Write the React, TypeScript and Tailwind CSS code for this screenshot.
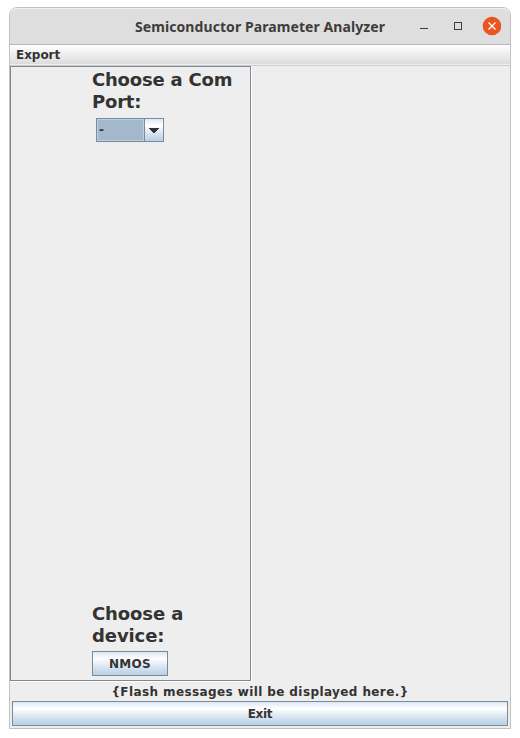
const metal = "border border-[#7a8a99] bg-[linear-gradient(to_bottom,#dde8f3_0%,#ffffff_30%,#dde8f3_60%,#b8cfe5_100%)]";

function TitleBar() {
  return (
    <header className="flex h-9 shrink-0 items-center rounded-t-[7px] border-t border-[#f2f2f2] bg-[#dedede]">
      <h1 className="ml-[125px] w-[252px] whitespace-nowrap font-['Noto_Sans',sans-serif] text-[14px] leading-5 font-bold tracking-[0.08px] text-[#3d3d3d]">
        Semiconductor Parameter Analyzer
      </h1>
      <svg className="ml-auto mr-[9px] -mt-px" width="82" height="20" viewBox="0 0 82 20" fill="none">
        <path d="M1 12h8v1H1z" fill="#3d3d3d" />
        <rect x="35.5" y="6.5" width="7" height="7" stroke="#3d3d3d" />
        <circle cx="73" cy="10" r="9.3" fill="#e95420" />
        <path d="M69.5 6.5l7 7M76.5 6.5l-7 7" stroke="#fff" strokeWidth="1.4" />
      </svg>
    </header>
  );
}

function ComPortSelect() {
  return (
    <div className="mt-[5px] ml-1 flex h-6 w-[68px] border border-[#7a8a99]">
      <div className="flex w-[47px] items-center border border-[#b8cfe5] bg-[#a3b8cc] pl-px text-[12px] leading-none">
        -
      </div>
      <div className="flex flex-1 items-center border-l border-[#7a8a99] bg-[linear-gradient(to_bottom,#dde8f3_0%,#ffffff_30%,#dde8f3_60%,#b8cfe5_100%)] pl-1">
        <svg width="10" height="5" viewBox="0 0 10 5" shapeRendering="crispEdges">
          <path d="M0 0h10v1H0zM1 1h8v1H1zM2 2h6v1H2zM3 3h4v1H3zM4 4h2v1H4z" fill="#333" />
        </svg>
      </div>
    </div>
  );
}

export default function App() {
  return (
    <div className="h-[738px] w-[520px] bg-white pt-[7px] pl-[9px] font-['DejaVu_Sans',sans-serif] font-bold text-[#333]">
      <div className="flex h-[722px] w-[502px] flex-col rounded-t-lg border border-[#c1c1c1] bg-[#eee]">
        <TitleBar />
        <nav className="flex h-[22px] shrink-0 items-center border-y border-t-[#b8b8b8] border-b-[#ccc] bg-[linear-gradient(to_bottom,#ffffff,#dadada)] pl-1.5 text-[12px] leading-none shadow-[inset_0_-1px_0_#eee]">
          <span className="tracking-[-0.05px]">Export</span>
        </nav>
        <main className="flex h-[616px] shrink-0">
          <section className="flex w-[242px] flex-col border-r border-b border-white">
            <div className="flex flex-1 flex-col justify-between border border-[#7a8a99] pl-[81px]">
              <div>
                <h2 className="mt-[2px] w-[150px] text-[18px] leading-[22px] tracking-[-0.2px]">Choose a Com Port:</h2>
                <ComPortSelect />
              </div>
              <div className="pb-1">
                <h2 className="w-[120px] text-[18px] leading-[22px] tracking-[-0.1px]">Choose a device:</h2>
                <button className={`mt-1 flex h-[25px] w-[76px] items-center justify-center text-[12px] leading-none tracking-[0.3px] ${metal}`}>
                  NMOS
                </button>
              </div>
            </div>
          </section>
        </main>
        <p className="flex h-[19px] shrink-0 items-center justify-center text-[12px] leading-none tracking-[0.4px]">
          {"{Flash messages will be displayed here.}"}
        </p>
        <button className={`mx-0.5 flex h-[25px] shrink-0 items-center justify-center text-[12px] leading-none tracking-[-0.3px] ${metal}`}>
          Exit
        </button>
      </div>
    </div>
  );
}
